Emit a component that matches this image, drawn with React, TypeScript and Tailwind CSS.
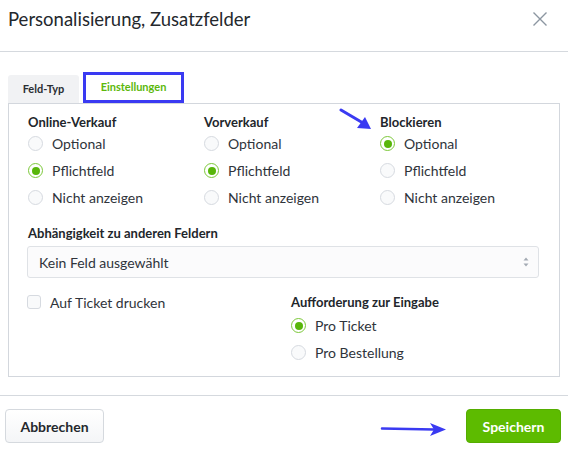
import React from "react";

const font = { fontFamily: "Lato, 'Open Sans', sans-serif" };

function Radio({ label, checked }: { label: string; checked?: boolean }) {
  return (
    <div className="flex items-center h-[27px] gap-[9px]">
      {checked ? (
        <span className="w-[15px] h-[15px] rounded-full border-[1.5px] border-[#7cc83a] bg-white flex items-center justify-center">
          <span className="w-[8px] h-[8px] rounded-full bg-[#58b60a]"></span>
        </span>
      ) : (
        <span className="w-[15px] h-[15px] rounded-full border border-[#d6dae0] bg-[#f9fafb]"></span>
      )}
      <span className="text-[14px] text-[#2f343b]">{label}</span>
    </div>
  );
}

function Column({ title, value }: { title: string; value: number }) {
  const opts = ["Optional", "Pflichtfeld", "Nicht anzeigen"];
  return (
    <div>
      <div className="text-[13px] font-bold text-[#22262b] h-[16px] leading-[16px]">{title}</div>
      {opts.map((o, i) => (
        <Radio key={o} label={o} checked={i === value} />
      ))}
    </div>
  );
}

export default function App() {
  return (
    <div className="relative w-[568px] h-[457px] bg-white overflow-hidden" style={font}>
      {/* Header */}
      <div className="h-[52px] flex items-start justify-between pl-[8px] pr-[20px] pt-[7px] border-b border-[#d5d9de]">
        <h1 className="text-[18.5px] text-[#24282d] leading-[24px]">Personalisierung, Zusatzfelder</h1>
        <svg width="16" height="16" viewBox="0 0 16 16" className="mt-[4px]">
          <path d="M1.5 1.5 L14.5 14.5 M14.5 1.5 L1.5 14.5" stroke="#8c96a1" strokeWidth="1.4" fill="none" />
        </svg>
      </div>

      {/* Body */}
      <div className="px-[8px] pt-[20px] h-[344px] border-b border-[#d5d9de]">
        <div className="flex items-end gap-[4px]">
          <div className="w-[71px] h-[28px] bg-[#f1f2f4] rounded-t-[3px] flex items-center justify-center text-[11px] font-bold text-[#2a2e33]">
            Feld-Typ
          </div>
          <div className="w-[101px] h-[31px] border-[3px] border-[#3a3af2] bg-white flex items-center justify-center text-[11px] font-bold text-[#5cb80b]">
            Einstellungen
          </div>
        </div>

        <div className="h-[274px] border border-[#d3d7dd] pl-[19px] pr-[17px] pt-[10px]">
          <div className="grid grid-cols-[176px_176px_1fr]">
            <Column title="Online-Verkauf" value={1} />
            <Column title="Vorverkauf" value={1} />
            <Column title="Blockieren" value={0} />
          </div>

          <div className="mt-[13px] text-[13px] font-bold text-[#22262b] leading-[18px]">Abhängigkeit zu anderen Feldern</div>
          <div className="mt-[4px] w-[512px] -ml-[1px] h-[32px] border border-[#dfe2e6] rounded-[3px] bg-[#fbfbfc] flex items-center justify-between pl-[11px] pr-[8px]">
            <span className="text-[14px] text-[#2f343b]">Kein Feld ausgewählt</span>
            <svg width="8" height="12" viewBox="0 0 8 12">
              <path d="M4 1.5 L6.5 4.5 H1.5 Z M4 10.5 L6.5 7.5 H1.5 Z" fill="#a3aab3" />
            </svg>
          </div>

          <div className="mt-[16px] flex">
            <div className="w-[264px] flex items-center gap-[9px] h-[16px] -ml-[1px]">
              <span className="w-[14px] h-[14px] rounded-[3px] border border-[#d6dae0] bg-[#f9fafb]"></span>
              <span className="text-[14px] text-[#2f343b]">Auf Ticket drucken</span>
            </div>
            <div>
              <div className="text-[13px] font-bold text-[#22262b] h-[16px] leading-[16px]">Aufforderung zur Eingabe</div>
              <div className="mt-[2px]">
                <Radio label="Pro Ticket" checked />
                <Radio label="Pro Bestellung" />
              </div>
            </div>
          </div>
        </div>
      </div>

      {/* Footer */}
      <div className="flex items-center justify-between pl-[5px] pr-[7px] pt-[13px]">
        <button className="w-[99px] h-[34px] rounded-[4px] border border-[#d5d9de] bg-gradient-to-b from-white to-[#f4f5f7] text-[14px] font-bold text-[#24282d]">
          Abbrechen
        </button>
        <button className="w-[95px] h-[34px] rounded-[4px] border border-[#55ad00] bg-[#5dbb00] text-[14px] font-bold text-white">
          Speichern
        </button>
      </div>

      {/* Annotation arrows */}
      <svg className="absolute left-[338px] top-[108px]" width="36" height="24" viewBox="0 0 36 24">
        <path d="M3 2 L25 15" stroke="#3a3af2" strokeWidth="3" strokeLinecap="round" />
        <path d="M33 21 L19 20 L27 9 Z" fill="#3a3af2" />
      </svg>
      <svg className="absolute left-[380px] top-[421px]" width="68" height="16" viewBox="0 0 68 16">
        <path d="M2 7.5 L54 8.5" stroke="#3a3af2" strokeWidth="2.5" strokeLinecap="round" />
        <path d="M66 8.5 L50 2 L54 8.5 L50 15 Z" fill="#3a3af2" />
      </svg>
    </div>
  );
}
